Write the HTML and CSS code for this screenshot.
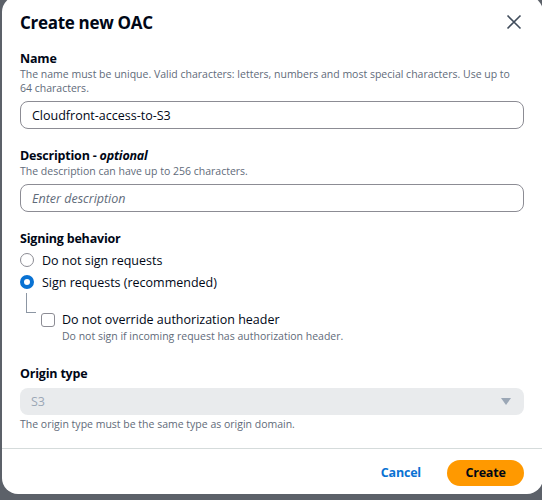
FILE: index.html
```html
<!DOCTYPE html>
<html>
<head>
<meta charset="utf-8">
<link rel="stylesheet" href="styles.css">
</head>
<body>
<div class="modal">
  <div class="header">
    <h2 class="title">Create new OAC</h2>
    <svg class="close" width="16" height="16" viewBox="0 0 16 16"><path d="M1.5 1.5L14.5 14.5M14.5 1.5L1.5 14.5" stroke="#414d5c" stroke-width="1.6" fill="none"/></svg>
  </div>
  <div class="body">
    <div class="field">
      <div class="label">Name</div>
      <div class="hint">The name must be unique. Valid characters: letters, numbers and most special characters. Use up to 64 characters.</div>
      <div class="input">Cloudfront-access-to-S3</div>
    </div>
    <div class="field">
      <div class="label">Description - <i>optional</i></div>
      <div class="hint">The description can have up to 256 characters.</div>
      <div class="input">
        <span class="placeholder">Enter description</span>
      </div>
    </div>
    <div class="field">
      <div class="label">Signing behavior</div>
      <div class="radios">
        <div class="radio-row"><span class="radio"></span>Do not sign requests</div>
        <div class="radio-row"><span class="radio checked"></span>Sign requests (recommended)</div>
      </div>
      <div class="nested">
        <span class="connector"></span>
        <div class="check-row">
          <span class="checkbox"></span>
          <div>
            <div class="check-label">Do not override authorization header</div>
            <div class="hint">Do not sign if incoming request has authorization header.</div>
          </div>
        </div>
      </div>
    </div>
    <div class="field origin">
      <div class="label">Origin type</div>
      <div class="select"><span>S3</span><svg width="10" height="7" viewBox="0 0 10 7"><path d="M0 0h10L5 7z" fill="#9ba7b6"/></svg></div>
      <div class="hint below">The origin type must be the same type as origin domain.</div>
    </div>
  </div>
  <div class="footer">
    <span class="cancel">Cancel</span>
    <span class="create">Create</span>
  </div>
</div>
</body>
</html>
```
FILE: styles.css
```css
* { box-sizing: border-box; }
html, body { margin: 0; padding: 0; }
body {
  width: 542px; height: 500px; overflow: hidden;
  background: #5c6169;
  font-family: "Open Sans", "Noto Sans", sans-serif;
  color: #000716;
}
.modal {
  margin-left: 2px;
  margin-top: -4px;
  width: 541px;
  height: 498px;
  background: #fff;
  border-radius: 16px;
  padding-top: 4px;
}
.header {
  display: flex; align-items: center; justify-content: space-between;
  padding: 0 21px 0 18px;
  height: 44px;
}
.title { margin: 0; font-size: 17px; font-weight: 700; letter-spacing: -0.3px; }
.close { display: block; }
.body { padding: 6px 19px 0 18px; }
.field { margin-bottom: 18px; }
.label { font-size: 12.5px; font-weight: 700; line-height: 17px; letter-spacing: -0.2px; }
.label i { font-weight: 700; }
.hint { font-size: 10.5px; color: #5f6b7a; line-height: 14px; }
.input {
  margin-top: 6px;
  height: 28px;
  border: 1px solid #8c8c94;
  border-radius: 8px;
  padding: 0 11px;
  display: flex; align-items: center;
  font-size: 12.5px;
}
.placeholder { font-style: italic; color: #5f6b7a; }
.radios { margin-top: 2px; }
.radio-row { display: flex; align-items: center; font-size: 12.5px; height: 22px; }
.radio {
  width: 14px; height: 14px; border-radius: 50%;
  border: 1.5px solid #8c8c94; margin: 0 8px 0 0; flex: none;
}
.radio.checked { border: 4.5px solid #0972d3; }
.nested { display: flex; }
.connector {
  width: 10px; height: 20px; margin: 0 5px 0 6px;
  border-left: 1px solid #8c96a3; border-bottom: 1px solid #8c96a3;
  flex: none;
}
.check-row { display: flex; align-items: flex-start; padding-top: 18px; }
.checkbox {
  width: 14px; height: 14px; border: 1.5px solid #8c8c94; border-radius: 3px;
  margin: 2px 7px 0 0; flex: none;
}
.check-label { font-size: 12.5px; line-height: 18px; }
.origin { margin-top: 22px; }
.select {
  margin-top: 6px; height: 27px; background: #e9ebed; border-radius: 8px;
  display: flex; align-items: center; justify-content: space-between;
  padding: 0 13px 0 11px; font-size: 12.5px; color: #9ba7b6;
}
.below { margin-top: 2px; }
.footer {
  border-top: 1px solid #d5dbdb;
  height: 48px;
  display: flex; align-items: center; justify-content: flex-end;
  padding: 0 19px;
  gap: 26px;
  margin-top: -1px;
}
.cancel { color: #0972d3; font-weight: 700; font-size: 12.5px; letter-spacing: -0.2px; }
.create {
  background: #ff9900; border-radius: 14px; font-weight: 700; font-size: 12.5px;
  letter-spacing: -0.2px;
  height: 26px; width: 77px; display: flex; align-items: center; justify-content: center;
}
```
